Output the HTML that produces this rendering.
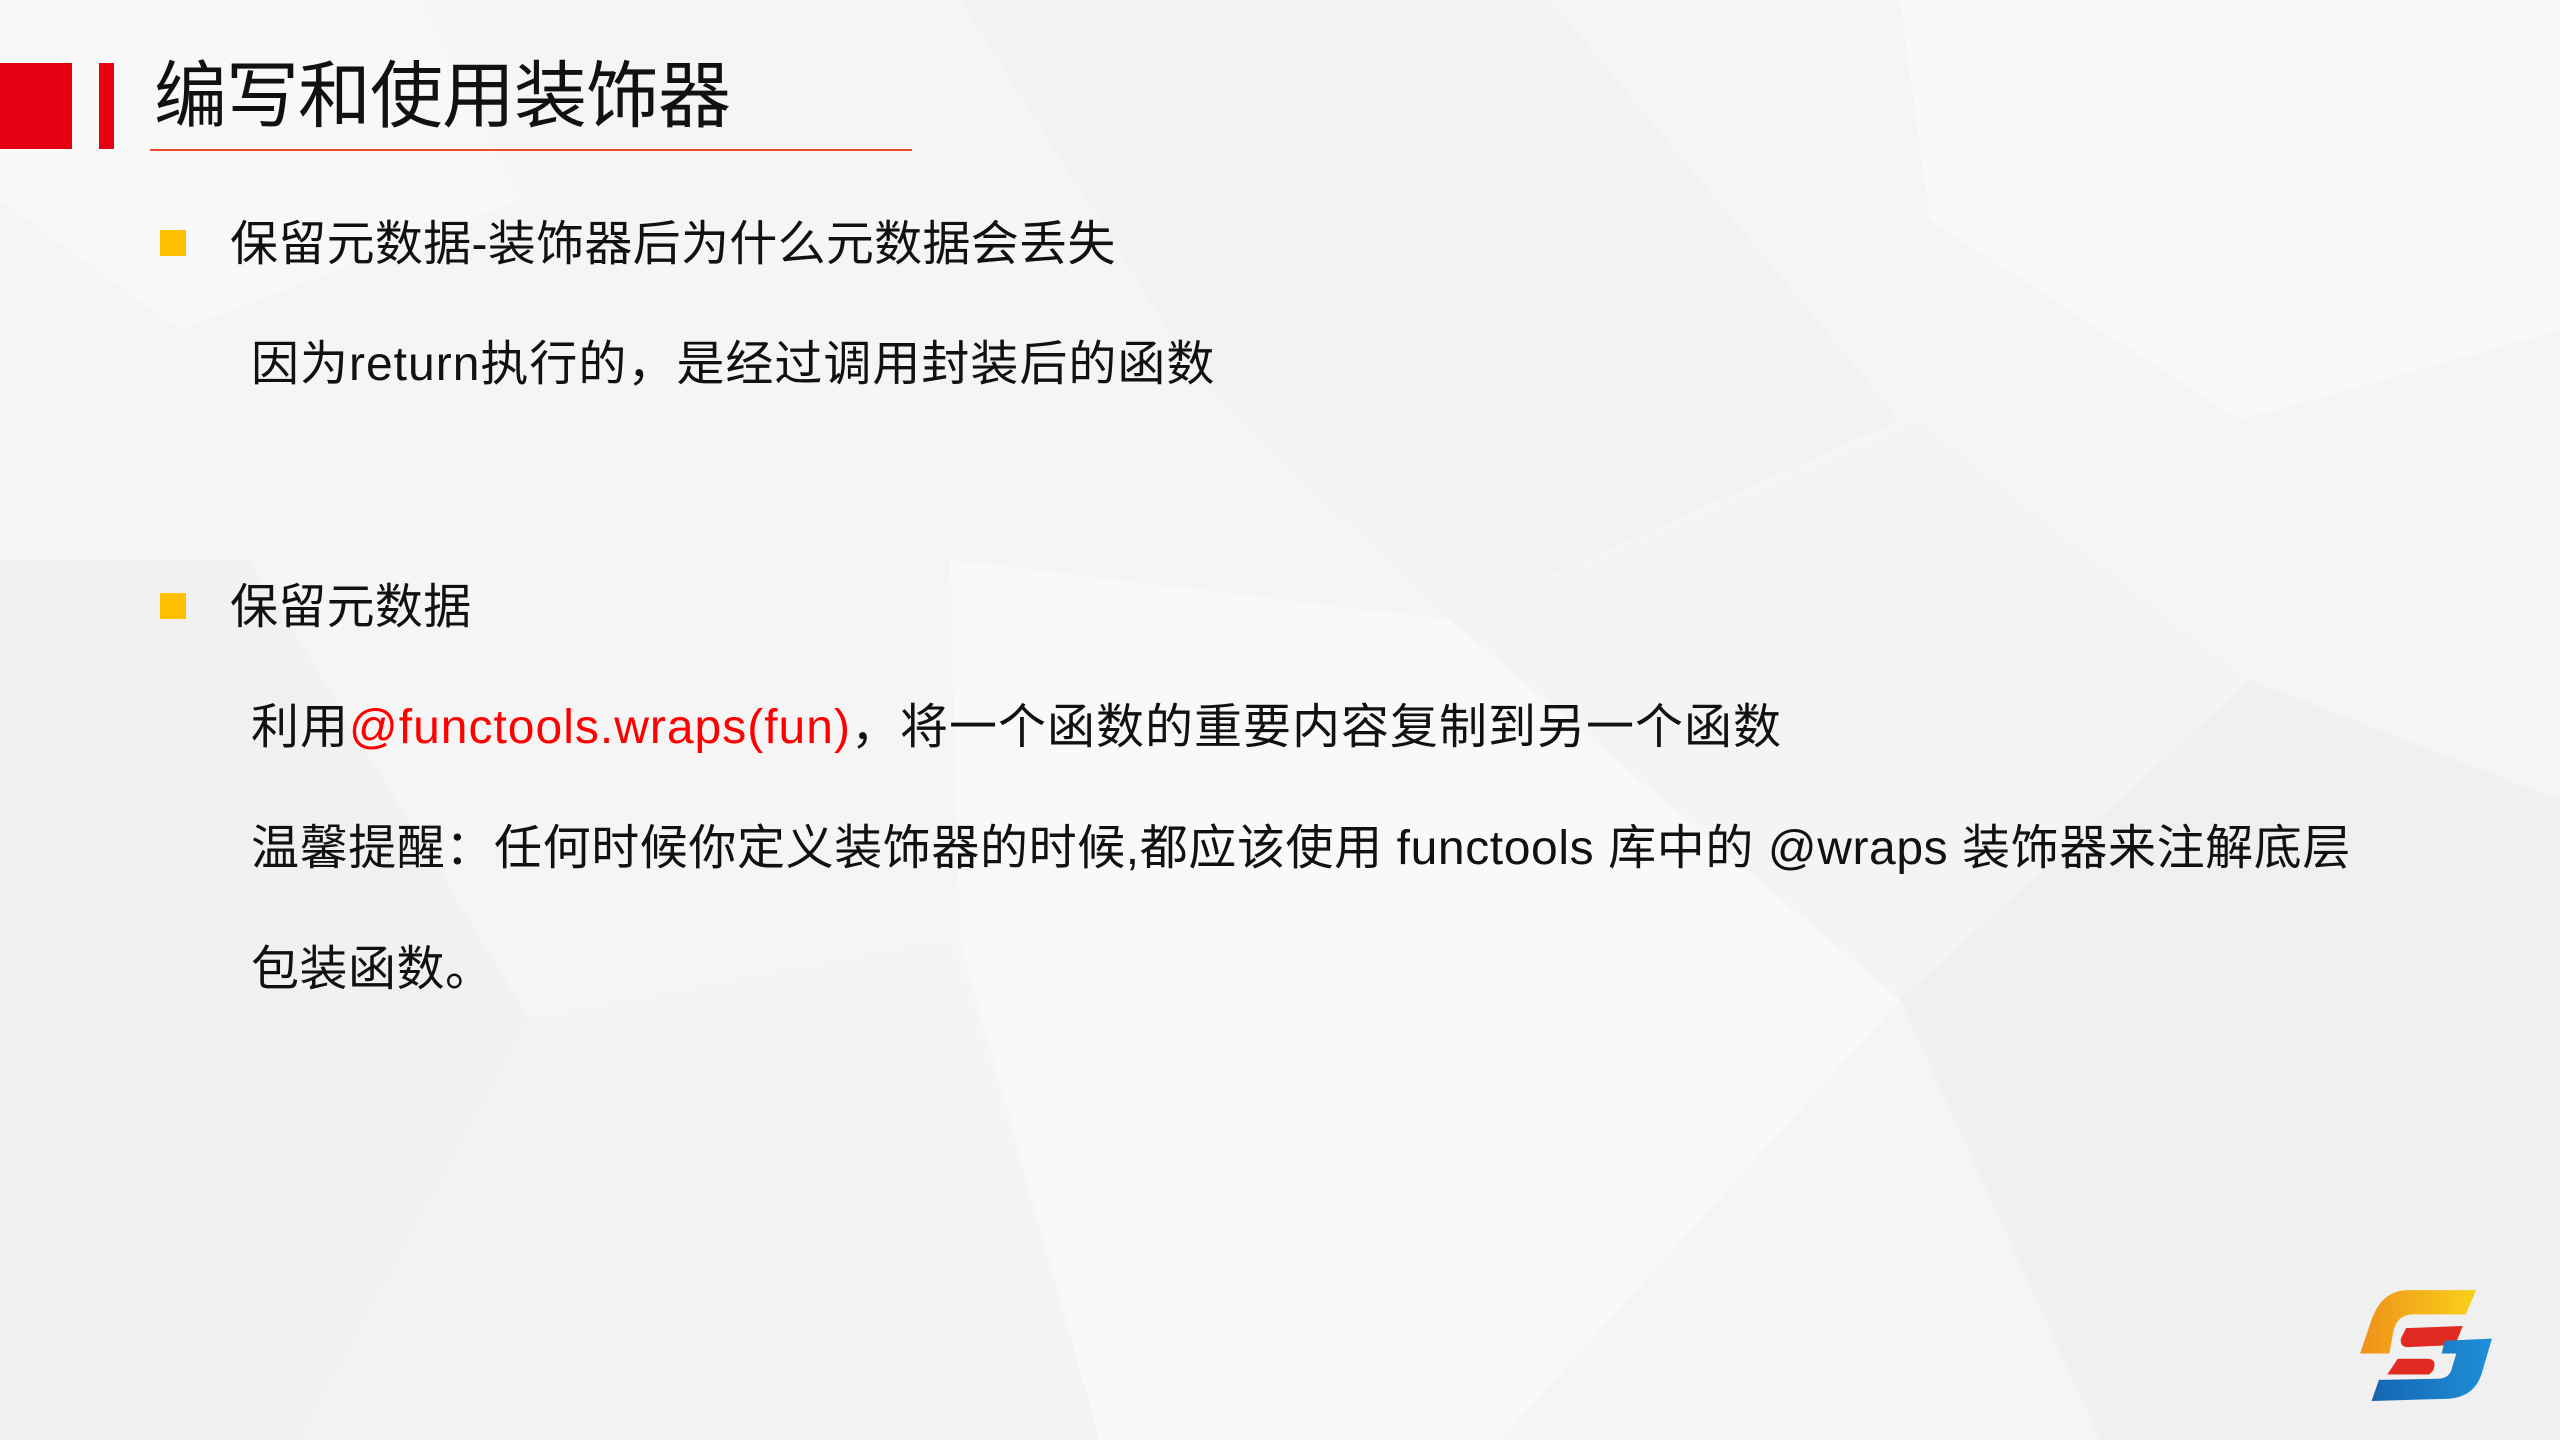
<!DOCTYPE html>
<html><head><meta charset="utf-8"><style>
html,body{margin:0;padding:0}
body{width:2560px;height:1440px;position:relative;overflow:hidden;background:#f5f5f5;font-family:"Liberation Sans","Noto Sans CJK SC",sans-serif;color:#111}
.t{position:absolute;white-space:nowrap;line-height:1}
.sq{position:absolute;width:26px;height:26px;background:#ffc000}
</style></head><body>
<svg width="2560" height="1440" style="position:absolute;left:0;top:0">
<polygon points="0,0 420,0 520,200 180,330 0,200" fill="#f8f8f8"/>
<polygon points="960,0 1550,0 1900,420 1450,620 1200,380" fill="#f2f2f2"/>
<polygon points="1900,0 2560,0 2560,330 2240,420 1930,220" fill="#f9f9f9"/>
<polygon points="0,560 250,560 530,1020 300,1440 0,1440" fill="#f1f1f1"/>
<polygon points="950,560 1450,620 1900,1000 1500,1440 1100,1440 960,940" fill="#f9f9f9"/>
<polygon points="1900,1000 2250,680 2560,800 2560,1440 2100,1440" fill="#f0f0f0"/>
<polygon points="530,1020 950,940 1100,1440 300,1440" fill="#f3f3f3"/>
<polygon points="1450,620 1920,420 2250,680 1900,1000" fill="#f4f4f4"/>
</svg>
<div style="position:absolute;left:0;top:63px;width:72px;height:86px;background:#e60012"></div>
<div style="position:absolute;left:99px;top:63px;width:15px;height:86px;background:#e60012"></div>
<div class="t" style="left:154px;top:60px;font-size:73px;letter-spacing:-1px">编写和使用装饰器</div>
<div style="position:absolute;left:150px;top:149px;width:762px;height:2px;background:#f04a2a"></div>

<div class="sq" style="left:160px;top:230px"></div>
<div class="t" style="left:230px;top:221px;font-size:48px;letter-spacing:0.3px">保留元数据-装饰器后为什么元数据会丢失</div>
<div class="t" style="left:251px;top:341px;font-size:48px;letter-spacing:1px">因为return执行的，是经过调用封装后的函数</div>

<div class="sq" style="left:160px;top:593px"></div>
<div class="t" style="left:230px;top:584px;font-size:48px;letter-spacing:0.3px">保留元数据</div>
<div class="t" style="left:251px;top:704px;font-size:48px;letter-spacing:1px">利用<span style="color:#ff0000">@functools.wraps(fun)</span>，将一个函数的重要内容复制到另一个函数</div>
<div class="t" style="left:251px;top:825px;font-size:48px;letter-spacing:0.6px">温馨提醒：任何时候你定义装饰器的时候,都应该使用 functools 库中的 @wraps 装饰器来注解底层</div>
<div class="t" style="left:251px;top:946px;font-size:48px;letter-spacing:0.5px">包装函数。</div>

<svg style="position:absolute;left:2358px;top:1288px" width="136" height="114" viewBox="32 30 130 108" preserveAspectRatio="none">
<defs>
<linearGradient id="o" x1="0" y1="0" x2="1" y2="0"><stop offset="0" stop-color="#f0901a"/><stop offset="1" stop-color="#f8d21a"/></linearGradient>
<linearGradient id="b" x1="0" y1="0" x2="1" y2="0"><stop offset="0" stop-color="#1565b0"/><stop offset="1" stop-color="#1e90d8"/></linearGradient>
</defs>
<path d="M80,32 L145,32 L135,55 L85,55 Q70,55 66,70 L62,92 L34,92 L45,60 Q55,32 80,32Z" fill="url(#o)"/>
<path d="M78,68 L132,66 L125,84 L80,86 Q72,86 73,78 Z" fill="#e02a22"/>
<path d="M70,97 L98,97 Q108,97 104,108 L100,112 L60,112 Z" fill="#e02a22"/>
<path d="M115,80 L160,78 L150,112 Q142,135 115,135 L45,137 L52,117 L108,116 Q120,116 122,105 L126,92 L112,92 Z" fill="url(#b)"/>
</svg>
</body></html>
